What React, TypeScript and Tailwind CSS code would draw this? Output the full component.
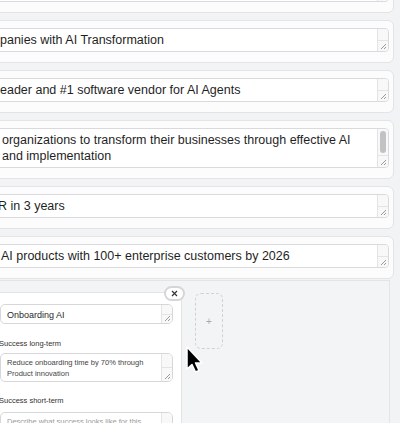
import React from 'react';

function Grip() {
  return (
    <svg width="8" height="8" viewBox="0 0 8 8" className="absolute bottom-[1px] right-[1px]">
      <path d="M7 2 L2 7 M7 5 L5 7" stroke="#8e8e8e" strokeWidth="0.9" />
    </svg>
  );
}

function ScrollStrip({ thumb = false }: { thumb?: boolean }) {
  return (
    <div className="relative w-[11px] shrink-0 border-l border-[#e4e4e6] bg-[#f8f8f8] flex flex-col">
      <div className="flex-1 relative">
        {thumb && <div className="absolute left-[2px] right-[2px] top-[2px] bottom-[2px] rounded-full bg-[#c2c2c4]" />}
      </div>
      <div className={`${thumb ? 'h-[12px]' : 'flex-1'} border-t border-[#e4e4e6] relative`}>
        <Grip />
      </div>
    </div>
  );
}

function FieldCard({ lines, shift = 0, thumb = false }: { lines: string[]; shift?: number; thumb?: boolean }) {
  return (
    <div className="rounded-md border border-[#e3e4e6] bg-[#fcfcfc] pt-[7px] pb-[10px] pl-2 pr-[4px]">
      <div className="flex rounded-[4px] border border-[#d9dadd] bg-white overflow-hidden">
        <div className="flex-1 min-h-[22px] py-[3px] pl-[10px] text-[12.5px] leading-4 text-[#1f1f1f] whitespace-nowrap overflow-hidden">
          {lines.map((l, i) => (
            <div key={i} className="h-4" style={{ marginLeft: shift }}>
              {l}
            </div>
          ))}
        </div>
        <ScrollStrip thumb={thumb} />
      </div>
    </div>
  );
}

function SmallBox({ children, h }: { children: React.ReactNode; h: string }) {
  return (
    <div className={`flex rounded-[5px] border border-[#d6d7da] bg-white overflow-hidden ${h}`}>
      <div className="flex-1 pl-[6px] pt-[3px] whitespace-nowrap overflow-hidden">{children}</div>
      <ScrollStrip />
    </div>
  );
}

export default function App() {
  return (
    <div className="relative w-[400px] h-[423px] overflow-hidden bg-[#f2f3f5] font-['Liberation_Sans',Arial,sans-serif]">
      <div className="-ml-5 -mt-[30px] w-[414px] flex flex-col gap-[7px]">
        <FieldCard lines={['']} />
        <FieldCard lines={['panies with AI Transformation']} />
        <FieldCard lines={['eader and #1 software vendor for AI Agents']} />
        <FieldCard
          thumb
          lines={['organizations to transform their businesses through effective AI', 'and implementation']}
          shift={2}
        />
        <FieldCard lines={['R in 3 years']} shift={-2} />
        <FieldCard lines={['AI products with 100+ enterprise customers by 2026']} shift={1} />
      </div>

      <div className="mt-[1px] -ml-[6px] w-[396px] h-[200px] border-t border-r border-[#e3e4e6] bg-[#f3f4f6] pt-[11px] flex gap-[13px] items-start">
        <div className="relative w-[188px] h-[160px] rounded-md border border-[#e3e4e6] bg-white pt-[11px] pl-[5px] pr-[8px]">
          <div className="absolute -top-[7px] right-[-4px] w-[21px] h-[15px] rounded-full border-2 border-[#d5d6d8] bg-white flex items-center justify-center">
            <svg width="7" height="7" viewBox="0 0 7 7">
              <path d="M1 1 L6 6 M6 1 L1 6" stroke="#333" strokeWidth="1.2" />
            </svg>
          </div>
          <SmallBox h="h-[20px]">
            <div className="text-[9px] leading-[12px] text-[#2a2a2a] pt-[1px]">Onboarding AI</div>
          </SmallBox>
          <div className="mt-[15px] text-[7.5px] leading-[10px] text-[#333] -ml-[1px]">Success long-term</div>
          <div className="mt-[4px]">
            <SmallBox h="h-[29px]">
              <div className="text-[7.5px] leading-[11px] text-[#444]">
                Reduce onboarding time by 70% through
                <br />
                Product innovation
              </div>
            </SmallBox>
          </div>
          <div className="mt-[14px] text-[7.5px] leading-[10px] text-[#333] -ml-[1px]">Success short-term</div>
          <div className="mt-[6px]">
            <SmallBox h="h-[29px]">
              <div className="text-[7.5px] leading-[11px] text-[#9a9a9a]">Describe what success looks like for this</div>
            </SmallBox>
          </div>
        </div>
        <div className="mt-[1px] w-[28px] h-[56px] rounded-md border border-dashed border-[#cfd1d4] flex items-center justify-center text-[10px] text-[#a8a8a8]">
          +
        </div>
      </div>

      <svg className="absolute left-[185px] top-[345px]" width="20" height="30" viewBox="0 0 20 30">
        <path
          d="M2 2 L2 24 L7 19.5 L10.5 27 L14 25.5 L10.5 18 L17 18 Z"
          fill="#000"
          stroke="#fff"
          strokeWidth="1.5"
          strokeLinejoin="round"
        />
      </svg>
    </div>
  );
}
